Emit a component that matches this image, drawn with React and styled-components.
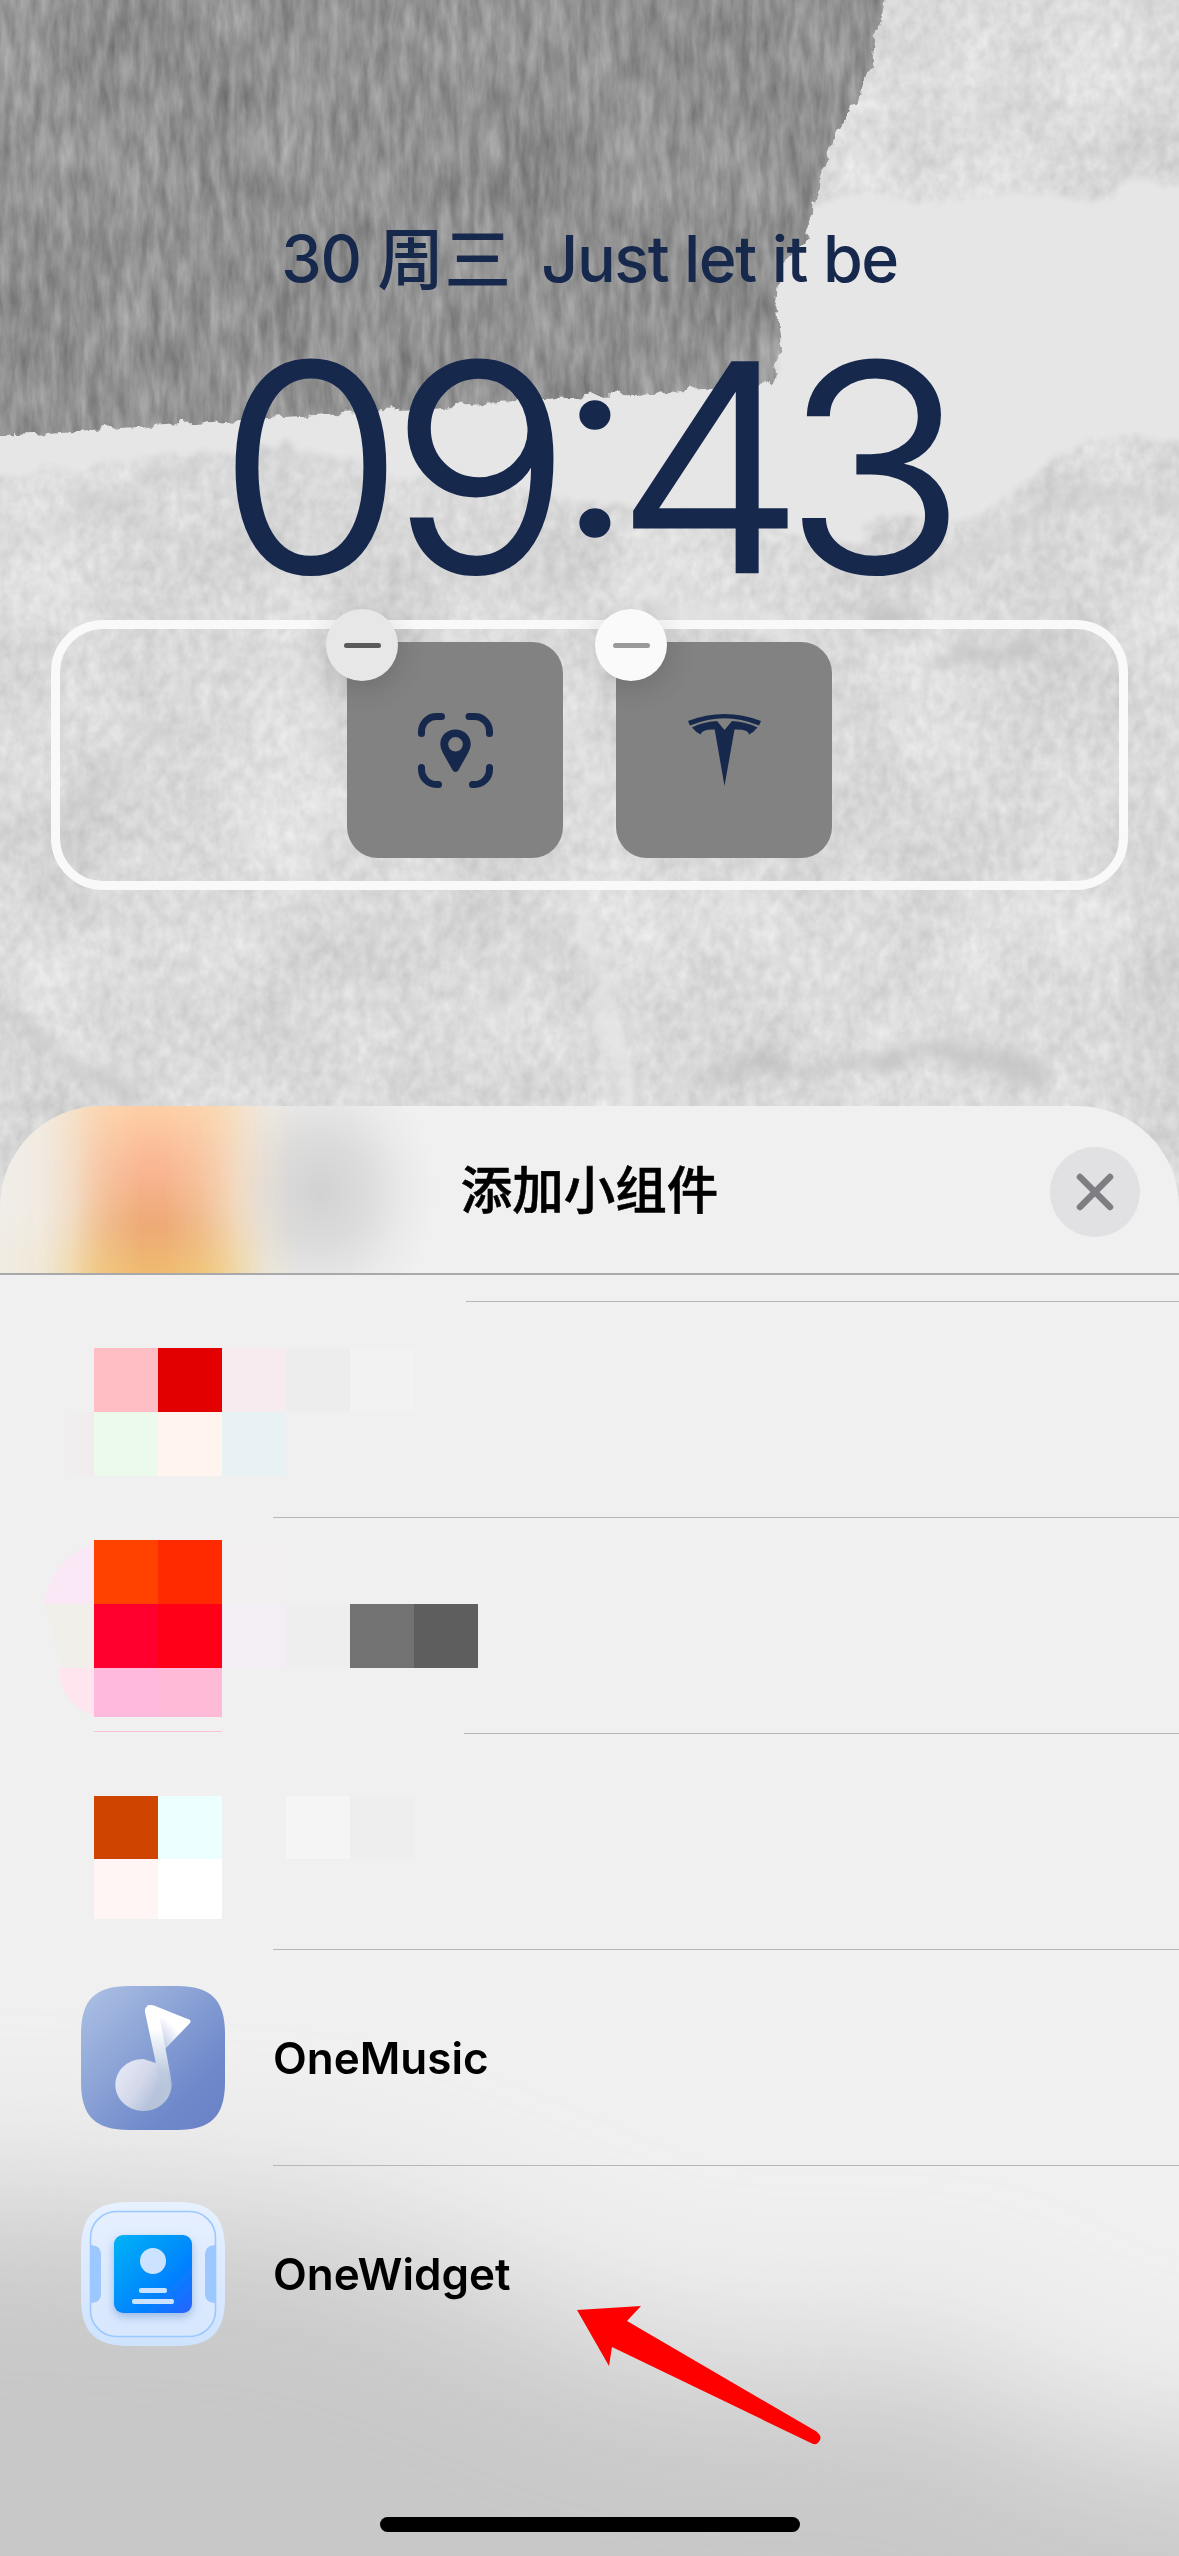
import React from "react";
import styled, { createGlobalStyle } from "styled-components";

const ink = "#17284d";
const font = `Inter, "Noto Sans CJK SC", "Liberation Sans", sans-serif`;

const GlobalStyle = createGlobalStyle`
  * { box-sizing: border-box; }
  html, body { margin: 0; padding: 0; background: #dadada; }
  body { overflow: hidden; }
`;

const Screen = styled.main`
  position: relative;
  isolation: isolate;
  width: 1179px;
  height: 2556px;
  overflow: hidden;
  display: flex;
  flex-direction: column;
  font-family: ${font};
`;

const WallpaperSvg = styled.svg`
  position: absolute;
  inset: 0;
  z-index: -1;
  display: block;
`;

const LockScreen = styled.section`
  height: 1106px;
  flex: none;
  padding-top: 221px;
  display: flex;
  flex-direction: column;
  align-items: center;
  color: ${ink};
`;

const DateLine = styled.div`
  display: flex;
  align-items: center;
  height: 76px;
  line-height: 76px;
  font-size: 64.5px;
  font-weight: 500;
  white-space: pre;
`;

const DayNumber = styled.span`
  letter-spacing: -1px;
  margin-right: 16px;
`;

const Weekday = styled.span`
  font-family: "Noto Sans CJK SC", sans-serif;
  font-size: 67px;
  margin-right: 30px;
  transform: translateY(-4px);
`;

const Caption = styled.span`
  letter-spacing: -1.4px;
`;

const Clock = styled.div`
  height: 240px;
  margin-top: 50px;
  margin-right: 10px;
  line-height: 240px;
  font-size: 288px;
  font-weight: 300;
  letter-spacing: -14px;
  white-space: nowrap;
  -webkit-text-stroke: 2.5px ${ink};
  transform: scaleX(1.05);
`;

const Colon = styled.span`
  font-size: 257px;
  line-height: 0;
  vertical-align: 37px;
  letter-spacing: -17px;
`;

const TightDigit = styled.span`
  letter-spacing: -21px;
`;

const WidgetFrame = styled.div`
  width: 1077px;
  height: 270px;
  margin-top: 33px;
  padding-bottom: 1px;
  border: 9px solid #f9f9f9;
  border-radius: 52px;
  display: flex;
  justify-content: center;
  gap: 53px;
  padding-top: 13px;
`;

const Widget = styled.div`
  position: relative;
  width: 216px;
  height: 216px;
  border-radius: 31px;
  background: #828282;
  display: flex;
  align-items: center;
  justify-content: center;
`;

const RemoveButton = styled.button`
  position: absolute;
  left: -21px;
  top: -33px;
  width: 72px;
  height: 72px;
  padding: 0;
  border: 0;
  border-radius: 50%;
  background: ${(p) => (p.$bright ? "#fafafa" : "#e7e7e7")};
  box-shadow: 0 6px 30px rgba(0, 0, 0, 0.16);
  display: flex;
  align-items: center;
  justify-content: center;
  &::before {
    content: "";
    width: 37px;
    height: 5px;
    border-radius: 3px;
    background: ${(p) => (p.$bright ? "#999" : "#5a5a5a")};
  }
`;

const Sheet = styled.section`
  position: relative;
  isolation: isolate;
  flex: 1;
  overflow: hidden;
  border-radius: 101px 101px 0 0;
  background: #f0f0f0;
  display: flex;
  flex-direction: column;
`;

const SheetShade = styled.div`
  position: absolute;
  z-index: -1;
  left: -300px;
  right: -300px;
  top: 900px;
  height: 900px;
  filter: blur(80px);
  &::before {
    content: "";
    display: block;
    height: 100%;
    background: #c8c8c9;
    clip-path: polygon(0 195px, 300px 195px, 620px 215px, 800px 285px, 930px 345px, 1110px 365px, 1230px 345px, 1350px 425px, 1500px 455px, 1779px 455px, 1779px 900px, 0 900px);
  }
`;

const SheetHeader = styled.header`
  position: relative;
  isolation: isolate;
  height: 169px;
  flex: none;
  border-bottom: 2px solid #a9a9ab;
  display: grid;
  grid-template-columns: 1fr auto 1fr;
  align-items: center;
  padding: 5px 39px 0;
  overflow: hidden;
`;

const HeaderGlow = styled.div`
  position: absolute;
  z-index: -1;
  inset: 0;
  background:
    radial-gradient(ellipse 115px 135px at 320px 86px, rgba(140, 140, 143, 0.3), rgba(140, 140, 143, 0.2) 40%, rgba(140, 140, 143, 0.06) 75%, rgba(140, 140, 143, 0) 100%);
  &::before,
  &::after {
    content: "";
    position: absolute;
    inset: -30px;
    filter: blur(9px);
  }
  &::before {
    background: linear-gradient(#f7dcb6 15%, #f4dcba 60%, #f2d48f 85%);
    mask-image: linear-gradient(90deg, rgba(0, 0, 0, 0.1) 20px, rgba(0, 0, 0, 0.3) 80px, rgba(0, 0, 0, 0.85) 130px, #000 230px, rgba(0, 0, 0, 0.7) 262px, rgba(0, 0, 0, 0.25) 292px, transparent 330px);
  }
  &::after {
    background: linear-gradient(#fdcfa7 13%, #f9b693 40%, #eda975 66%, #efbb70 87%);
    mask-image: linear-gradient(90deg, transparent 70px, rgba(0, 0, 0, 0.15) 102px, rgba(0, 0, 0, 0.7) 140px, #000 170px, #000 195px, rgba(0, 0, 0, 0.7) 225px, rgba(0, 0, 0, 0.15) 267px, transparent 300px);
  }
`;

const Title = styled.h1`
  grid-column: 2;
  margin: 0;
  font-size: 51.5px;
  line-height: 60px;
  font-weight: 500;
  font-family: "Noto Sans CJK SC", sans-serif;
  -webkit-text-stroke: 0.6px #000;
  color: #000;
  transform: translateY(-5px);
`;

const CloseButton = styled.button`
  justify-self: end;
  width: 90px;
  height: 90px;
  padding: 0;
  border: 0;
  border-radius: 50%;
  background: #e1e1e3;
  display: flex;
  align-items: center;
  justify-content: center;
`;

const List = styled.ul`
  list-style: none;
  margin: 0;
  padding: 0;
`;

const Row = styled.li`
  height: ${(p) => p.$h || 216}px;
  display: flex;
  flex-direction: column;
`;

const RowBody = styled.div`
  flex: 1;
  min-height: 0;
  display: flex;
  align-items: ${(p) => (p.$top ? "flex-start" : "center")};
  gap: 49px;
  padding: ${(p) => p.$top || 0}px 0 0 ${(p) => p.$left ?? 81}px;
`;

const Divider = styled.div`
  height: 1px;
  background: #b8b8ba;
  margin-left: ${(p) => p.$from}px;
`;

const AppName = styled.span`
  font-size: 44px;
  font-weight: 600;
  margin-left: -1px;
  color: #000;
`;

const Mosaic = styled.div`
  display: grid;
  grid-template-columns: 50px repeat(6, 64px);
  grid-template-rows: ${(p) => p.$rows};
`;

const Cell = styled.i`
  background: ${(p) => p.$c};
  clip-path: ${(p) => p.$clip || "none"};
`;

function Wallpaper() {
  return (
    <WallpaperSvg width="1179" height="1300" viewBox="0 0 1179 1300" aria-hidden="true">
      <defs>
        <filter id="paper" x="0" y="0" width="100%" height="100%" colorInterpolationFilters="sRGB">
          <feTurbulence type="fractalNoise" baseFrequency="0.009 0.008" numOctaves="6" seed="21" result="a" />
          <feColorMatrix in="a" values=".13 0 0 0 .73  .13 0 0 0 .73  .13 0 0 0 .73  0 0 0 0 1" result="base" />
          <feTurbulence type="fractalNoise" baseFrequency="0.09 0.07" numOctaves="3" seed="4" result="b" />
          <feColorMatrix in="b" values=".12 0 0 0 0  .12 0 0 0 0  .12 0 0 0 0  0 0 0 0 1" result="grain" />
          <feComposite in="base" in2="grain" operator="arithmetic" k2="1" k3="1" />
        </filter>
        <filter id="bark" x="0" y="0" width="100%" height="100%" colorInterpolationFilters="sRGB">
          <feTurbulence type="fractalNoise" baseFrequency="0.1 0.024" numOctaves="4" seed="3" result="n" />
          <feColorMatrix in="n" values=".26 0 0 0 .375  .26 0 0 0 .375  .26 0 0 0 .375  0 0 0 0 1" result="streaks" />
          <feTurbulence type="fractalNoise" baseFrequency="0.012 0.009" numOctaves="4" seed="11" result="m" />
          <feColorMatrix in="m" values=".13 0 0 0 0  .13 0 0 0 0  .13 0 0 0 0  0 0 0 0 1" result="clouds" />
          <feComposite in="streaks" in2="clouds" operator="arithmetic" k2="1" k3="1" result="g" />
          <feTurbulence type="fractalNoise" baseFrequency="0.07" numOctaves="4" seed="5" result="t" />
          <feDisplacementMap in="SourceGraphic" in2="t" scale="13" xChannelSelector="R" yChannelSelector="A" result="s" />
          <feGaussianBlur in="s" stdDeviation="0.7" result="s2" />
          <feComposite in="g" in2="s2" operator="in" />
        </filter>
        <filter id="torn" x="-5%" y="-5%" width="110%" height="110%">
          <feTurbulence type="fractalNoise" baseFrequency="0.03" numOctaves="4" seed="9" />
          <feDisplacementMap in="SourceGraphic" scale="30" xChannelSelector="R" yChannelSelector="G" />
          <feGaussianBlur stdDeviation="3" />
        </filter>
        <filter id="soft" x="-30%" y="-30%" width="160%" height="160%">
          <feTurbulence type="fractalNoise" baseFrequency="0.02" numOctaves="4" seed="2" />
          <feDisplacementMap in="SourceGraphic" scale="40" xChannelSelector="R" yChannelSelector="G" />
          <feGaussianBlur stdDeviation="7" />
        </filter>
      </defs>
      <rect width="1179" height="1300" filter="url(#paper)" />
      <g filter="url(#soft)" fill="none" strokeLinecap="round">
        <path d="M-10 560L120 490L230 440L330 480L500 470L640 500" stroke="#c6c6c6" strokeWidth="9" opacity=".6" />
        <path d="M270 432L330 450" stroke="#bdbdbd" strokeWidth="18" opacity=".7" />
        <path d="M570 900L600 980L630 1110" stroke="#e9e9e9" strokeWidth="16" opacity=".8" />
        <path d="M560 910L490 1010" stroke="#c9c9c9" strokeWidth="8" opacity=".7" />
        <path d="M700 1070L860 1066L900 1066" stroke="#bababa" strokeWidth="12" opacity=".8" />
        <path d="M880 1062L960 1050L1040 1076" stroke="#c0c0c0" strokeWidth="24" opacity=".7" />
        <path d="M0 1010L60 1050L130 1090" stroke="#c2c2c2" strokeWidth="15" opacity=".7" />
        <path d="M860 620L910 610M950 660L1020 650" stroke="#bcbcbc" strokeWidth="14" opacity=".7" />
        <path d="M0 840L100 790L170 720" stroke="#c6c6c6" strokeWidth="10" opacity=".5" />
        <path d="M130 730L170 725" stroke="#bcbcbc" strokeWidth="6" opacity=".6" />
        <path d="M640 590L730 620L790 640" stroke="#e6e6e6" strokeWidth="18" opacity=".7" />
        <path d="M1179 500L1060 490L960 560L880 570" stroke="#c8c8c8" strokeWidth="12" opacity=".6" />
        <path d="M318 650V900" stroke="#e5e5e5" strokeWidth="10" opacity=".6" />
      </g>
      <path
        d="M780 215L812 205L870 194L925 202L1010 192L1105 200L1130 180L1220 188V436L1110 436L1060 455L1030 485L960 520L890 516L850 545L780 535L700 515L620 512L560 496L400 478L300 445L200 450L-40 480V400L770 370Z"
        fill="#e6e6e6"
        filter="url(#torn)"
      />
      <path
        d="M-30 -30H888L885 3L876 33L872 63L857 103L834 135L825 163L818 183L812 213L804 243L778 268L774 303L782 348L771 385L600 395L300 416L-30 438Z"
        fill="#000"
        filter="url(#bark)"
      />
    </WallpaperSvg>
  );
}

function ScanPin() {
  return (
    <svg width="75" height="75" viewBox="0 0 75 75" fill="none" stroke={ink} strokeWidth="7" strokeLinecap="round">
      <path d="M3.5 20.5V18.5A15 15 0 0 1 18.5 3.5H23.5M51 3.5H56.5A15 15 0 0 1 71.5 18.5V20.5M71.5 54.5V56.5A15 15 0 0 1 56.5 71.5H54.5M20.5 71.5H18.5A15 15 0 0 1 3.5 56.5V54.5" />
      <path
        fill={ink}
        stroke="none"
        fillRule="evenodd"
        d="M37.500 16.500C28.500 16.500 22.300 23 22.300 31C22.300 35 24 38 26 42L34.500 57C36 59.500 39 59.500 40.500 57L49 42C51 38 52.700 35 52.700 31C52.700 23 46.500 16.500 37.500 16.500ZM37.500 24a7.300 7.300 0 1 1 0 14.600a7.300 7.300 0 1 1 0-14.600Z"
      />
    </svg>
  );
}

function CarLogo() {
  return (
    <svg width="73" height="72" viewBox="0 0 73 72" fill={ink}>
      <path d="M0 7Q18 0 36.500 0T73 7L71 11.500Q53 4.300 36.500 4.300T2 11.500Z" />
      <path d="M4 13.500Q14 8 29 7L36.500 16L44 7Q59 8 69.500 13.500Q66 18 61 20.500Q60.500 15 46.500 15.500L36.500 72L26.700 15.500Q14 15 12.700 20.500Q7.500 18 4 13.500Z" />
    </svg>
  );
}

function MusicIcon() {
  return (
    <svg width="144" height="144" viewBox="0 0 144 144">
      <defs>
        <linearGradient id="mBg" x1="0" y1="0" x2="1" y2="1">
          <stop offset="0" stopColor="#aec2e4" />
          <stop offset=".75" stopColor="#6e88ca" />
          <stop offset="1" stopColor="#6a80c6" />
        </linearGradient>
        <linearGradient id="mHead" x1="0" y1=".2" x2="1" y2=".8">
          <stop offset="0" stopColor="#e6e9f6" />
          <stop offset=".45" stopColor="#d3d8ea" />
          <stop offset=".75" stopColor="#b5c2da" />
          <stop offset="1" stopColor="#b9c7da" />
        </linearGradient>
        <linearGradient id="mStem" x1="0" y1="0" x2="0" y2="1">
          <stop offset=".25" stopColor="#fff" />
          <stop offset=".7" stopColor="#bccbe0" />
          <stop offset="1" stopColor="#b9c7da" stopOpacity="0" />
        </linearGradient>
        <linearGradient id="mFlag" x1=".7" y1=".2" x2=".1" y2=".8">
          <stop offset=".3" stopColor="#fff" />
          <stop offset="1" stopColor="#b5c3e2" />
        </linearGradient>
      </defs>
      <path d="M48 0H96C130 0 144 14 144 48V96C144 130 130 144 96 144H48C14 144 0 130 0 96V48C0 14 14 0 48 0Z" fill="url(#mBg)" />
      <path d="M66 19L109 34Q110 35 109 37L84 63L74 40Z" fill="url(#mFlag)" />
      <path d="M62.500 73C46 73 34.300 85 34.300 99S47 125 62.500 125S90.500 113 90.500 99L84 80Z" fill="url(#mHead)" />
      <path d="M64 26C63 21 68 17.500 73 19.500L109 34L79 33L90.500 95C91 103 88 110 82 116Q77 105 78 92Z" fill="url(#mStem)" />
    </svg>
  );
}

function WidgetIcon() {
  return (
    <svg width="144" height="144" viewBox="0 0 144 144">
      <defs>
        <linearGradient id="wBg" x1="0" y1="0" x2="0" y2="1">
          <stop offset="0" stopColor="#e7f1ff" />
          <stop offset="1" stopColor="#cfe3fe" />
        </linearGradient>
        <linearGradient id="wCard" x1="0" y1="0" x2="1" y2="1">
          <stop offset="0" stopColor="#00b4f4" />
          <stop offset=".65" stopColor="#0082ff" />
          <stop offset="1" stopColor="#2a63ff" />
        </linearGradient>
        <filter id="wShadow" x="-40%" y="-40%" width="180%" height="180%">
          <feDropShadow dx="0" dy="4" stdDeviation="5" floodColor="#5a88c8" floodOpacity=".5" />
        </filter>
      </defs>
      <path d="M48 0H96C130 0 144 14 144 48V96C144 130 130 144 96 144H48C14 144 0 130 0 96V48C0 14 14 0 48 0Z" fill="url(#wBg)" />
      <rect x="9.500" y="9.500" width="125" height="125" rx="26" fill="#e4eeff" fillOpacity=".35" stroke="#9cc7ff" strokeWidth="1.600" />
      <path d="M9 43q11 0 11 10V92q0 9-11 9ZM135 43q-11 0-11 10V92q0 9 11 9Z" fill="#9cc7ff" />
      <rect x="33" y="33" width="78" height="78" rx="9" fill="url(#wCard)" filter="url(#wShadow)" />
      <circle cx="72" cy="59" r="13" fill="#cce3ff" />
      <rect x="58" y="86" width="28" height="5" rx="2" fill="#cce3ff" />
      <rect x="51" y="97" width="42" height="5" rx="2" fill="#cce3ff" />
    </svg>
  );
}

const Arrow = styled.svg`
  position: absolute;
  left: 570px;
  top: 2300px;
`;

const HomeIndicator = styled.div`
  width: 420px;
  height: 15px;
  border-radius: 8px;
  background: #000;
  margin: auto auto 24px;
`;

const mosaics = [
  {
    top: 46,
    from: 273,
    rows: "64px 64px",
    cells: [
      "transparent", "#ffbec3", "#e20000", "#f7ebf0", "#ededed", "#f2f2f2", "transparent",
      ["linear-gradient(90deg, transparent 20px, #f2ebee)", "none"], "#ebfaeb", "#fff5ee", "#e8f1f3",
    ],
  },
  {
    top: 22,
    from: 464,
    rows: "64px 64px 49px 14px 1px",
    cells: [
      ["#fbe8f6", "circle(76px at 75px 75px)"], "#ff4200", "#ff2a00", "#f1efef", "transparent", "transparent", "transparent",
      ["#f1efe9", "polygon(0 0, 100% 0, 100% 100%, 18px 100%)"], "#ff002e", "#ff0018", "#f3edf4", "#eee", "#727272", "#5e5e5e",
      ["#ffe5ee", "ellipse(44px 52px at 58px -4px)"], "#ffb9dc", "#ffbad7", "transparent", "transparent", "transparent", "transparent",
      "transparent", "transparent", "transparent", "transparent", "transparent", "transparent", "transparent",
      "transparent", "#fbc3d0", "#fbc3d0",
    ],
  },
  {
    top: 62,
    from: 273,
    rows: "63px 60px",
    cells: ["transparent", "#cf4500", "#ebffff", "transparent", "#f5f5f5", "#eee", "transparent", "transparent", "#fff5f4", "#fff"],
  },
];

const apps = [
  { name: "OneMusic", icon: <MusicIcon />, divider: true },
  { name: "OneWidget", icon: <WidgetIcon /> },
];

export default function App() {
  return (
    <Screen>
      <GlobalStyle />
      <Wallpaper />
      <LockScreen>
        <DateLine>
          <DayNumber>30</DayNumber>
          <Weekday>周三</Weekday>
          <Caption>Just let it be</Caption>
        </DateLine>
        <Clock>
          09<Colon>:</Colon>
          <TightDigit>4</TightDigit>3
        </Clock>
        <WidgetFrame>
          <Widget>
            <RemoveButton aria-label="移除" />
            <ScanPin />
          </Widget>
          <Widget>
            <RemoveButton aria-label="移除" $bright />
            <CarLogo />
          </Widget>
        </WidgetFrame>
      </LockScreen>
      <Sheet>
        <SheetShade />
        <SheetHeader>
          <HeaderGlow />
          <Title>添加小组件</Title>
          <CloseButton aria-label="关闭">
            <svg width="44" height="44" viewBox="0 0 44 44" stroke="#7e7e82" strokeWidth="6.500" strokeLinecap="round">
              <path d="M7 7L37 37M37 7L7 37" />
            </svg>
          </CloseButton>
        </SheetHeader>
        <List>
          <Row $h={27}>
            <RowBody />
            <Divider $from={466} />
          </Row>
          {mosaics.map((m, i) => (
            <Row key={i}>
              <RowBody $top={m.top} $left={44}>
                <Mosaic $rows={m.rows}>
                  {m.cells.map((c, j) => (
                    <Cell key={j} $c={Array.isArray(c) ? c[0] : c} $clip={Array.isArray(c) ? c[1] : "none"} />
                  ))}
                </Mosaic>
              </RowBody>
              <Divider $from={m.from} />
            </Row>
          ))}
          {apps.map((a) => (
            <Row key={a.name}>
              <RowBody>
                {a.icon}
                <AppName>{a.name}</AppName>
              </RowBody>
              {a.divider && <Divider $from={273} />}
            </Row>
          ))}
        </List>
        <HomeIndicator />
      </Sheet>
      <Arrow width="260" height="150" viewBox="570 2300 260 150" fill="#f00">
        <path d="M577 2310L641 2306L627 2321L816.500 2431.500Q822 2436 820 2440Q817 2446 812 2443.500L612 2347L609 2366Z" />
      </Arrow>
    </Screen>
  );
}
